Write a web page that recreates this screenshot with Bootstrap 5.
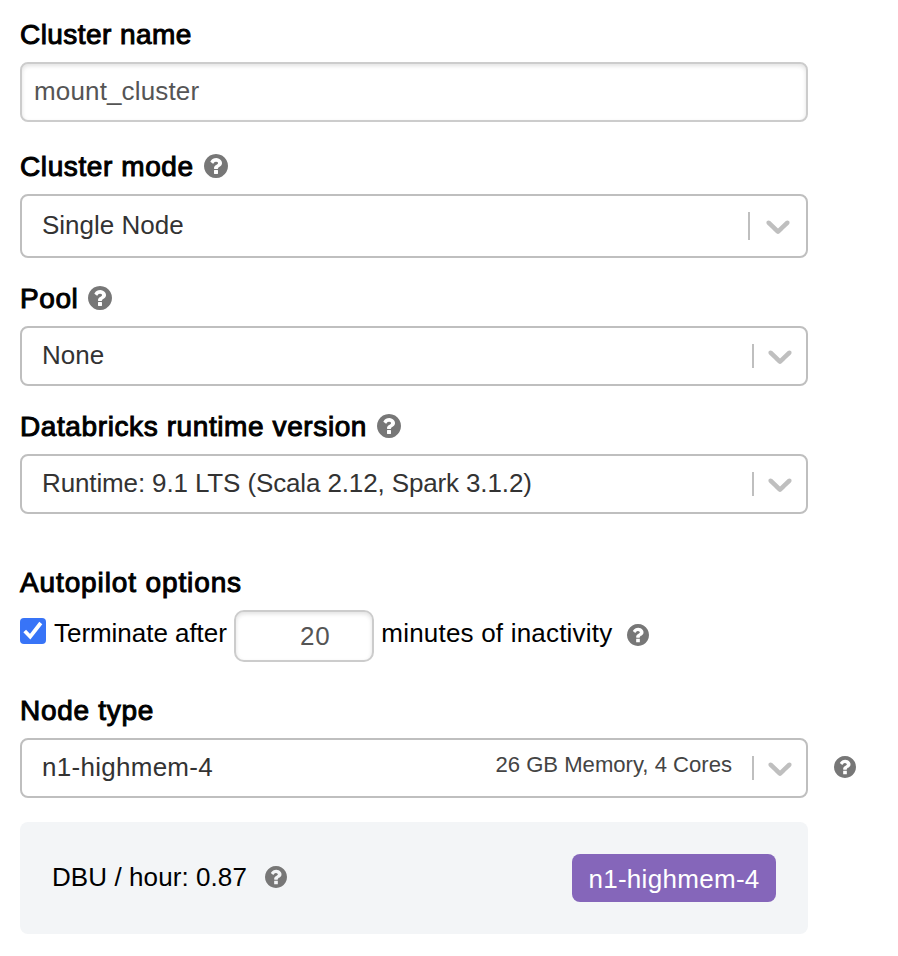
<!DOCTYPE html>
<html lang="en">
<head>
<meta charset="utf-8">
<meta name="viewport" content="width=device-width, initial-scale=1">
<title>Create cluster</title>
<link href="https://cdn.jsdelivr.net/npm/bootstrap@5.3.0/dist/css/bootstrap.min.css" rel="stylesheet">
<style>
body{font-family:"Liberation Sans",Arial,sans-serif;font-size:26px;line-height:32px;color:#000;background:#fff}
.cluster-form{width:788px;margin:18px 0 0 20px}
.field-label{height:32px;margin-bottom:12px;font-size:28px;gap:10px;letter-spacing:.6px;white-space:nowrap}
.field-label span{-webkit-text-stroke:1px #000;padding-top:2px}
.name-label{letter-spacing:.44px}
.autopilot-label{letter-spacing:.88px;margin-top:52px}
.mode-label{margin-top:28px}
.node-label{letter-spacing:.72px;margin-top:32px}
.help{flex:none;width:22px;height:22px;fill:#777}
.field-label .help{width:24px;height:24px}
.form-control.field-input{height:60px;border:2px solid #ccc;border-radius:8px;padding:0 12px 2px;font-size:26px;line-height:32px;color:#555;letter-spacing:.15px;box-shadow:inset 0 2px 4px rgba(0,0,0,.12)}
.form-control.minutes{width:140px;height:52px;border-radius:10px;padding:0 41px 0 12px;text-align:right;margin:0 7.500px 0 7px;letter-spacing:1px}
.picker{height:60px;border:2px solid #bfbfbf;border-radius:8px;padding:0 6px 0 20px;color:#333;white-space:nowrap}
.picker.tall{height:64px;padding-right:8px}
.picker .value{margin-bottom:2px}
.picker .runtime{letter-spacing:-.13px}
.picker .node{letter-spacing:.28px}
.picker .divider{width:2px;height:24px;background:#bfbfbf;margin-right:6px}
.picker.tall .divider{height:28px;margin-right:8px}
.picker .chevron{width:40px;height:40px;fill:#bfbfbf}
.picker .specs{font-size:22.1px;color:#444;margin:0 20px 7px 0}
.mb-24{margin-bottom:24px}
.autopilot{height:52px;white-space:nowrap}
.autopilot .txt{margin-bottom:7px;letter-spacing:-.04px}
.autopilot .after{letter-spacing:.2px}
.autopilot .help{margin:0 0 3px 14.500px}
.check-wrap{width:26px;height:26px;margin:0 8px 10px 0}
.form-check-input.auto-check{width:26px;height:26px;margin:0;border:0;border-radius:4px;background-color:#3874f7;background-image:none;padding:0}
.check-wrap svg{position:absolute;inset:0;pointer-events:none}
.node-help{margin:0 0 3px 26px}
.usage{height:112px;border-radius:8px;background:#f3f5f7;padding:0 32px}
.usage .help{margin:0 0 3px 18px}
.usage-text{margin-bottom:2px;letter-spacing:.08px}
.badge.node-badge{height:48px;width:204px;border-radius:8px;background:#8566ba;font-size:26px;font-weight:400;line-height:32px;padding:9px 0 0;letter-spacing:.3px}
</style>
</head>
<body>
<svg class="d-none" aria-hidden="true">
<symbol id="question" viewBox="0 128 1536 1536"><path d="M896 1376v-192q0-14-9-23t-23-9h-192q-14 0-23 9t-9 23v192q0 14 9 23t23 9h192q14 0 23-9t9-23zm256-672q0-88-55.5-163t-138.5-116-170-41q-243 0-371 213-15 24 8 42l132 100q7 6 19 6 16 0 25-12 53-68 86-92 34-24 86-24 48 0 85.500 26t37.500 59q0 38-20 61t-68 45q-63 28-115.500 86.500t-52.500 125.500v36q0 14 9 23t23 9h192q14 0 23-9t9-23q0-19 21.500-49.500t54.500-49.500q32-18 49-28.500t46-35 44.500-48 28-60.500 12.500-81zm384 192q0 209-103 385.500t-279.500 279.500-385.500 103-385.500-103-279.500-279.500-103-385.500 103-385.500 279.500-279.500 385.500-103 385.500 103 279.500 279.500 103 385.500z"/></symbol>
<symbol id="down" viewBox="0 0 20 20"><path d="M4.516 7.548c0.436-0.446 1.043-0.481 1.576 0l3.908 3.747 3.908-3.747c0.533-0.481 1.141-0.446 1.574 0 0.436 0.445 0.408 1.197 0 1.615-0.406 0.418-4.695 4.502-4.695 4.502-0.217 0.223-0.502 0.335-0.787 0.335s-0.57-0.112-0.789-0.335c0 0-4.287-4.084-4.695-4.502s-0.436-1.17 0-1.615z"/></symbol>
</svg>
<main class="cluster-form">
  <label class="field-label name-label d-flex align-items-center" for="name"><span>Cluster name</span></label>
  <input id="name" class="form-control field-input" type="text" value="mount_cluster">

  <div class="field-label mode-label d-flex align-items-center"><span>Cluster mode</span><svg class="help"><use href="#question"/></svg></div>
  <div class="picker tall d-flex align-items-center mb-24"><span class="value me-auto">Single Node</span><span class="divider"></span><svg class="chevron"><use href="#down"/></svg></div>

  <div class="field-label d-flex align-items-center"><span>Pool</span><svg class="help"><use href="#question"/></svg></div>
  <div class="picker d-flex align-items-center mb-24"><span class="value me-auto">None</span><span class="divider"></span><svg class="chevron"><use href="#down"/></svg></div>

  <div class="field-label d-flex align-items-center"><span>Databricks runtime version</span><svg class="help"><use href="#question"/></svg></div>
  <div class="picker d-flex align-items-center"><span class="value runtime me-auto">Runtime: 9.1 LTS (Scala 2.12, Spark 3.1.2)</span><span class="divider"></span><svg class="chevron"><use href="#down"/></svg></div>

  <div class="field-label autopilot-label d-flex align-items-center"><span>Autopilot options</span></div>
  <div class="autopilot d-flex align-items-center">
    <div class="check-wrap position-relative d-flex"><input class="form-check-input auto-check" type="checkbox" id="auto" checked><svg width="26" height="26" viewBox="0 0 26 26" fill="none" stroke="#fff" stroke-width="3.8"><path d="M4.700 13 10.200 18.700 20.800 5"/></svg></div>
    <label class="txt" for="auto">Terminate after</label>
    <input class="form-control field-input minutes" type="text" value="20" aria-label="Minutes">
    <span class="txt after">minutes of inactivity</span>
    <svg class="help"><use href="#question"/></svg>
  </div>

  <div class="field-label node-label d-flex align-items-center"><span>Node type</span></div>
  <div class="d-flex align-items-center mb-24">
    <div class="picker d-flex align-items-center w-100 flex-shrink-0"><span class="value node me-auto">n1-highmem-4</span><span class="specs">26 GB Memory, 4 Cores</span><span class="divider"></span><svg class="chevron"><use href="#down"/></svg></div>
    <svg class="help node-help"><use href="#question"/></svg>
  </div>

  <div class="usage d-flex align-items-center">
    <span class="usage-text">DBU / hour: 0.87</span><svg class="help"><use href="#question"/></svg>
    <span class="badge node-badge ms-auto">n1-highmem-4</span>
  </div>
</main>
</body>
</html>
